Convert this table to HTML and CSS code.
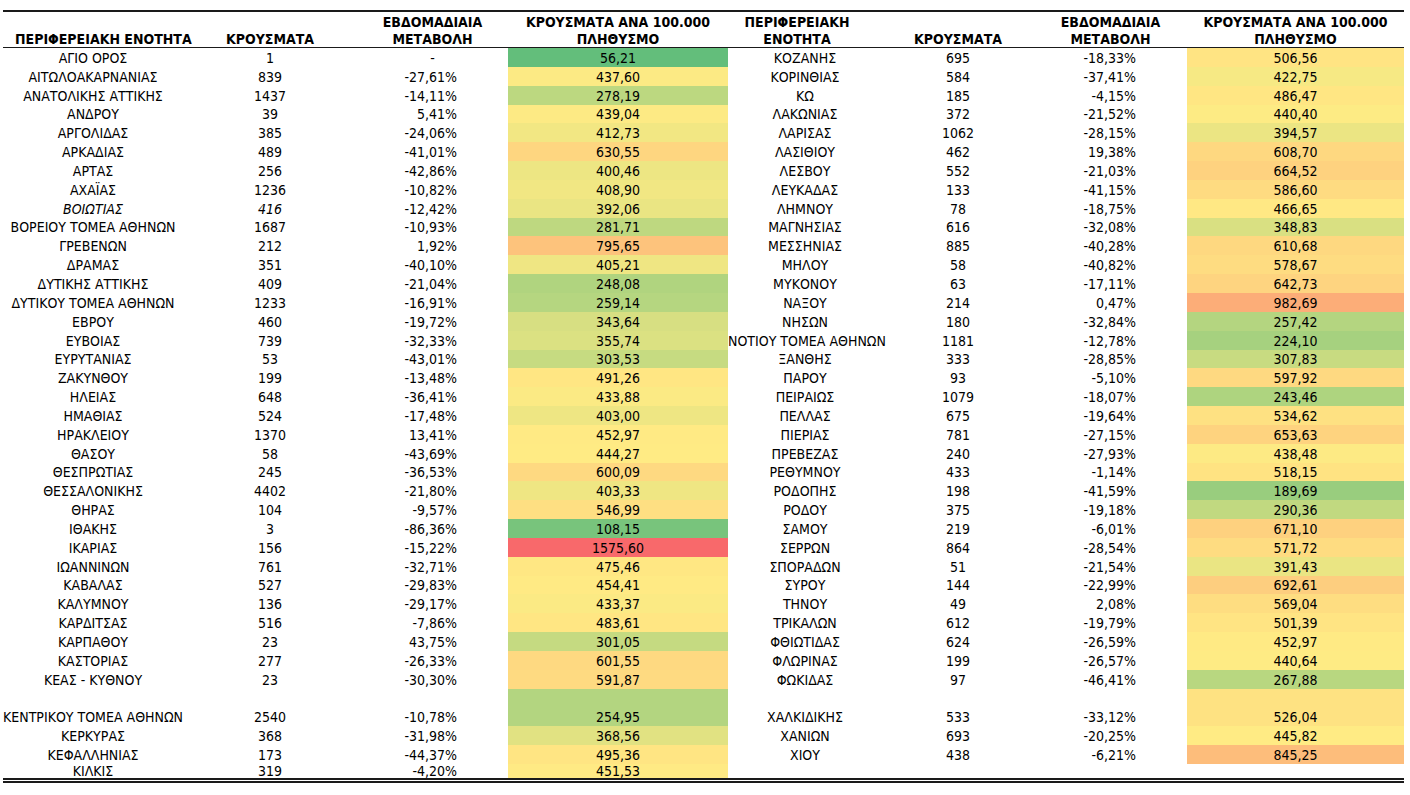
FILE: index.html
```html
<!DOCTYPE html>
<html lang="el">
<head>
<meta charset="utf-8">
<title>Κρούσματα ανά περιφερειακή ενότητα</title>
<link rel="stylesheet" href="styles.css">
</head>
<body>
<table class="sheet">
<colgroup>
<col class="w-name-l"><col class="w-cases-l"><col class="w-pct-l"><col class="w-heat-l">
<col class="w-name-r"><col class="w-cases-r"><col class="w-pct-r"><col class="w-heat-r">
</colgroup>
<thead>
<tr class="head">
<th class="h-name-l"><div class="hcell one">ΠΕΡΙΦΕΡΕΙΑΚΗ ΕΝΟΤΗΤΑ</div></th>
<th><div class="hcell one">ΚΡΟΥΣΜΑΤΑ</div></th>
<th><div class="hcell">ΕΒΔΟΜΑΔΙΑΙΑ<br>ΜΕΤΑΒΟΛΗ</div></th>
<th><div class="hcell">ΚΡΟΥΣΜΑΤΑ ΑΝΑ 100.000<br>ΠΛΗΘΥΣΜΟ</div></th>
<th class="h-name-r"><div class="hcell">ΠΕΡΙΦΕΡΕΙΑΚΗ<br>ΕΝΟΤΗΤΑ</div></th>
<th><div class="hcell one">ΚΡΟΥΣΜΑΤΑ</div></th>
<th><div class="hcell">ΕΒΔΟΜΑΔΙΑΙΑ<br>ΜΕΤΑΒΟΛΗ</div></th>
<th><div class="hcell">ΚΡΟΥΣΜΑΤΑ ΑΝΑ 100.000<br>ΠΛΗΘΥΣΜΟ</div></th>
</tr>
</thead>
<tbody>
<tr><td class="name">ΑΓΙΟ ΟΡΟΣ</td><td class="num">1</td><td class="dash">-</td><td class="heat">56,21</td><td class="name">ΚΟΖΑΝΗΣ</td><td class="num">695</td><td class="pct">-18,33%</td><td class="heat">506,56</td></tr>
<tr><td class="name">ΑΙΤΩΛΟΑΚΑΡΝΑΝΙΑΣ</td><td class="num">839</td><td class="pct">-27,61%</td><td class="heat">437,60</td><td class="name">ΚΟΡΙΝΘΙΑΣ</td><td class="num">584</td><td class="pct">-37,41%</td><td class="heat">422,75</td></tr>
<tr><td class="name">ΑΝΑΤΟΛΙΚΗΣ ΑΤΤΙΚΗΣ</td><td class="num">1437</td><td class="pct">-14,11%</td><td class="heat">278,19</td><td class="name">ΚΩ</td><td class="num">185</td><td class="pct">-4,15%</td><td class="heat">486,47</td></tr>
<tr><td class="name">ΑΝΔΡΟΥ</td><td class="num">39</td><td class="pct">5,41%</td><td class="heat">439,04</td><td class="name">ΛΑΚΩΝΙΑΣ</td><td class="num">372</td><td class="pct">-21,52%</td><td class="heat">440,40</td></tr>
<tr><td class="name">ΑΡΓΟΛΙΔΑΣ</td><td class="num">385</td><td class="pct">-24,06%</td><td class="heat">412,73</td><td class="name">ΛΑΡΙΣΑΣ</td><td class="num">1062</td><td class="pct">-28,15%</td><td class="heat">394,57</td></tr>
<tr><td class="name">ΑΡΚΑΔΙΑΣ</td><td class="num">489</td><td class="pct">-41,01%</td><td class="heat">630,55</td><td class="name">ΛΑΣΙΘΙΟΥ</td><td class="num">462</td><td class="pct">19,38%</td><td class="heat">608,70</td></tr>
<tr><td class="name">ΑΡΤΑΣ</td><td class="num">256</td><td class="pct">-42,86%</td><td class="heat">400,46</td><td class="name">ΛΕΣΒΟΥ</td><td class="num">552</td><td class="pct">-21,03%</td><td class="heat">664,52</td></tr>
<tr><td class="name">ΑΧΑΪΑΣ</td><td class="num">1236</td><td class="pct">-10,82%</td><td class="heat">408,90</td><td class="name">ΛΕΥΚΑΔΑΣ</td><td class="num">133</td><td class="pct">-41,15%</td><td class="heat">586,60</td></tr>
<tr><td class="name italic">ΒΟΙΩΤΙΑΣ</td><td class="num italic">416</td><td class="pct">-12,42%</td><td class="heat">392,06</td><td class="name">ΛΗΜΝΟΥ</td><td class="num">78</td><td class="pct">-18,75%</td><td class="heat">466,65</td></tr>
<tr><td class="name">ΒΟΡΕΙΟΥ ΤΟΜΕΑ ΑΘΗΝΩΝ</td><td class="num">1687</td><td class="pct">-10,93%</td><td class="heat">281,71</td><td class="name">ΜΑΓΝΗΣΙΑΣ</td><td class="num">616</td><td class="pct">-32,08%</td><td class="heat">348,83</td></tr>
<tr><td class="name">ΓΡΕΒΕΝΩΝ</td><td class="num">212</td><td class="pct">1,92%</td><td class="heat">795,65</td><td class="name">ΜΕΣΣΗΝΙΑΣ</td><td class="num">885</td><td class="pct">-40,28%</td><td class="heat">610,68</td></tr>
<tr><td class="name">ΔΡΑΜΑΣ</td><td class="num">351</td><td class="pct">-40,10%</td><td class="heat">405,21</td><td class="name">ΜΗΛΟΥ</td><td class="num">58</td><td class="pct">-40,82%</td><td class="heat">578,67</td></tr>
<tr><td class="name">ΔΥΤΙΚΗΣ ΑΤΤΙΚΗΣ</td><td class="num">409</td><td class="pct">-21,04%</td><td class="heat">248,08</td><td class="name">ΜΥΚΟΝΟΥ</td><td class="num">63</td><td class="pct">-17,11%</td><td class="heat">642,73</td></tr>
<tr><td class="name">ΔΥΤΙΚΟΥ ΤΟΜΕΑ ΑΘΗΝΩΝ</td><td class="num">1233</td><td class="pct">-16,91%</td><td class="heat">259,14</td><td class="name">ΝΑΞΟΥ</td><td class="num">214</td><td class="pct">0,47%</td><td class="heat">982,69</td></tr>
<tr><td class="name">ΕΒΡΟΥ</td><td class="num">460</td><td class="pct">-19,72%</td><td class="heat">343,64</td><td class="name">ΝΗΣΩΝ</td><td class="num">180</td><td class="pct">-32,84%</td><td class="heat">257,42</td></tr>
<tr><td class="name">ΕΥΒΟΙΑΣ</td><td class="num">739</td><td class="pct">-32,33%</td><td class="heat">355,74</td><td class="name">ΝΟΤΙΟΥ ΤΟΜΕΑ ΑΘΗΝΩΝ</td><td class="num">1181</td><td class="pct">-12,78%</td><td class="heat">224,10</td></tr>
<tr><td class="name">ΕΥΡΥΤΑΝΙΑΣ</td><td class="num">53</td><td class="pct">-43,01%</td><td class="heat">303,53</td><td class="name">ΞΑΝΘΗΣ</td><td class="num">333</td><td class="pct">-28,85%</td><td class="heat">307,83</td></tr>
<tr><td class="name">ΖΑΚΥΝΘΟΥ</td><td class="num">199</td><td class="pct">-13,48%</td><td class="heat">491,26</td><td class="name">ΠΑΡΟΥ</td><td class="num">93</td><td class="pct">-5,10%</td><td class="heat">597,92</td></tr>
<tr><td class="name">ΗΛΕΙΑΣ</td><td class="num">648</td><td class="pct">-36,41%</td><td class="heat">433,88</td><td class="name">ΠΕΙΡΑΙΩΣ</td><td class="num">1079</td><td class="pct">-18,07%</td><td class="heat">243,46</td></tr>
<tr><td class="name">ΗΜΑΘΙΑΣ</td><td class="num">524</td><td class="pct">-17,48%</td><td class="heat">403,00</td><td class="name">ΠΕΛΛΑΣ</td><td class="num">675</td><td class="pct">-19,64%</td><td class="heat">534,62</td></tr>
<tr><td class="name">ΗΡΑΚΛΕΙΟΥ</td><td class="num">1370</td><td class="pct">13,41%</td><td class="heat">452,97</td><td class="name">ΠΙΕΡΙΑΣ</td><td class="num">781</td><td class="pct">-27,15%</td><td class="heat">653,63</td></tr>
<tr><td class="name">ΘΑΣΟΥ</td><td class="num">58</td><td class="pct">-43,69%</td><td class="heat">444,27</td><td class="name">ΠΡΕΒΕΖΑΣ</td><td class="num">240</td><td class="pct">-27,93%</td><td class="heat">438,48</td></tr>
<tr><td class="name">ΘΕΣΠΡΩΤΙΑΣ</td><td class="num">245</td><td class="pct">-36,53%</td><td class="heat">600,09</td><td class="name">ΡΕΘΥΜΝΟΥ</td><td class="num">433</td><td class="pct">-1,14%</td><td class="heat">518,15</td></tr>
<tr><td class="name">ΘΕΣΣΑΛΟΝΙΚΗΣ</td><td class="num">4402</td><td class="pct">-21,80%</td><td class="heat">403,33</td><td class="name">ΡΟΔΟΠΗΣ</td><td class="num">198</td><td class="pct">-41,59%</td><td class="heat">189,69</td></tr>
<tr><td class="name">ΘΗΡΑΣ</td><td class="num">104</td><td class="pct">-9,57%</td><td class="heat">546,99</td><td class="name">ΡΟΔΟΥ</td><td class="num">375</td><td class="pct">-19,18%</td><td class="heat">290,36</td></tr>
<tr><td class="name">ΙΘΑΚΗΣ</td><td class="num">3</td><td class="pct">-86,36%</td><td class="heat">108,15</td><td class="name">ΣΑΜΟΥ</td><td class="num">219</td><td class="pct">-6,01%</td><td class="heat">671,10</td></tr>
<tr><td class="name">ΙΚΑΡΙΑΣ</td><td class="num">156</td><td class="pct">-15,22%</td><td class="heat">1575,60</td><td class="name">ΣΕΡΡΩΝ</td><td class="num">864</td><td class="pct">-28,54%</td><td class="heat">571,72</td></tr>
<tr><td class="name">ΙΩΑΝΝΙΝΩΝ</td><td class="num">761</td><td class="pct">-32,71%</td><td class="heat">475,46</td><td class="name">ΣΠΟΡΑΔΩΝ</td><td class="num">51</td><td class="pct">-21,54%</td><td class="heat">391,43</td></tr>
<tr><td class="name">ΚΑΒΑΛΑΣ</td><td class="num">527</td><td class="pct">-29,83%</td><td class="heat">454,41</td><td class="name">ΣΥΡΟΥ</td><td class="num">144</td><td class="pct">-22,99%</td><td class="heat">692,61</td></tr>
<tr><td class="name">ΚΑΛΥΜΝΟΥ</td><td class="num">136</td><td class="pct">-29,17%</td><td class="heat">433,37</td><td class="name">ΤΗΝΟΥ</td><td class="num">49</td><td class="pct">2,08%</td><td class="heat">569,04</td></tr>
<tr><td class="name">ΚΑΡΔΙΤΣΑΣ</td><td class="num">516</td><td class="pct">-7,86%</td><td class="heat">483,61</td><td class="name">ΤΡΙΚΑΛΩΝ</td><td class="num">612</td><td class="pct">-19,79%</td><td class="heat">501,39</td></tr>
<tr><td class="name">ΚΑΡΠΑΘΟΥ</td><td class="num">23</td><td class="pct">43,75%</td><td class="heat">301,05</td><td class="name">ΦΘΙΩΤΙΔΑΣ</td><td class="num">624</td><td class="pct">-26,59%</td><td class="heat">452,97</td></tr>
<tr><td class="name">ΚΑΣΤΟΡΙΑΣ</td><td class="num">277</td><td class="pct">-26,33%</td><td class="heat">601,55</td><td class="name">ΦΛΩΡΙΝΑΣ</td><td class="num">199</td><td class="pct">-26,57%</td><td class="heat">440,64</td></tr>
<tr><td class="name">ΚΕΑΣ - ΚΥΘΝΟΥ</td><td class="num">23</td><td class="pct">-30,30%</td><td class="heat">591,87</td><td class="name">ΦΩΚΙΔΑΣ</td><td class="num">97</td><td class="pct">-46,41%</td><td class="heat">267,88</td></tr>
<tr class="tall"><td class="name">ΚΕΝΤΡΙΚΟΥ ΤΟΜΕΑ ΑΘΗΝΩΝ</td><td class="num">2540</td><td class="pct">-10,78%</td><td class="heat">254,95</td><td class="name">ΧΑΛΚΙΔΙΚΗΣ</td><td class="num">533</td><td class="pct">-33,12%</td><td class="heat">526,04</td></tr>
<tr><td class="name">ΚΕΡΚΥΡΑΣ</td><td class="num">368</td><td class="pct">-31,98%</td><td class="heat">368,56</td><td class="name">ΧΑΝΙΩΝ</td><td class="num">693</td><td class="pct">-20,25%</td><td class="heat">445,82</td></tr>
<tr><td class="name">ΚΕΦΑΛΛΗΝΙΑΣ</td><td class="num">173</td><td class="pct">-44,37%</td><td class="heat">495,36</td><td class="name">ΧΙΟΥ</td><td class="num">438</td><td class="pct">-6,21%</td><td class="heat">845,25</td></tr>
<tr class="last"><td class="name">ΚΙΛΚΙΣ</td><td class="num">319</td><td class="pct">-4,20%</td><td class="heat">451,53</td><td class="name"></td><td class="num"></td><td class="pct"></td><td class="empty"></td></tr>
</tbody>
</table>
<script src="script.js"></script>
</body>
</html>
```

FILE: styles.css
```css
html, body {
  background: #ffffff;
}
body {
  margin: 10px 0 0 3px;
  font-family: "Liberation Sans Narrow", "DejaVu Sans Condensed", "Liberation Sans", sans-serif;
  font-size: 14px;
  color: #000;
}
.sheet {
  border-collapse: separate;
  border-spacing: 0;
  table-layout: fixed;
  width: 1401px;
  border-top: 2px solid #1a1a1a;
  border-bottom: 5px double #1a1a1a;
}
.w-name-l { width: 180px; }
.w-cases-l { width: 174px; }
.w-pct-l { width: 151px; }
.w-heat-l { width: 220px; }
.w-name-r { width: 154px; }
.w-cases-r { width: 152px; }
.w-pct-r { width: 153px; }
.w-heat-r { width: 217px; }

.head th {
  padding: 0;
  font-weight: bold;
  font-size: 14px;
  line-height: 17.4px;
  text-align: center;
  vertical-align: top;
  border-bottom: 1px solid #1a1a1a;
  white-space: nowrap;
}
.hcell {
  box-sizing: border-box;
  height: 35px;
  padding-top: 1.9px;
  overflow: visible;
}
.hcell.one {
  padding-top: 19.3px;
}
.head .h-name-l {
  text-align: left;
  padding-left: 12px;
}
.head .h-name-r {
  padding-right: 16px;
}

tbody tr { height: 18.85px; }
tbody tr.tall { height: 37.7px; }
tbody tr.last { height: 13.85px; }
tbody td {
  padding: 0;
  line-height: 17px;
  vertical-align: bottom;
  white-space: nowrap;
  text-align: center;
}
tbody tr.last td { line-height: 11.5px; }
.name, .num, .dash, .heat { text-align: center; }
.pct {
  text-align: right;
  padding-right: 51px;
}
.italic { font-style: italic; }
```

FILE: script.js
```js
(function () {
  var cells = Array.prototype.slice.call(document.querySelectorAll('.heat'));
  var vals = cells.map(function (c) { return parseFloat(c.textContent.replace(',', '.')); });
  var sorted = vals.slice().sort(function (a, b) { return a - b; });
  var n = sorted.length;
  var min = sorted[0], max = sorted[n - 1];
  var rank = 0.5 * (n - 1);
  var lo = Math.floor(rank), hi = Math.ceil(rank);
  var mid = sorted[lo] + (sorted[hi] - sorted[lo]) * (rank - lo);
  var green = [99, 190, 123], yellow = [255, 235, 132], red = [248, 105, 107];
  function mix(a, b, t) {
    return 'rgb(' + a.map(function (v, i) { return Math.round(v + (b[i] - v) * t); }).join(',') + ')';
  }
  cells.forEach(function (c, i) {
    var v = vals[i];
    var col = v <= mid ? mix(green, yellow, (v - min) / (mid - min)) : mix(yellow, red, (v - mid) / (max - mid));
    c.style.backgroundColor = col;
  });
})();
```
